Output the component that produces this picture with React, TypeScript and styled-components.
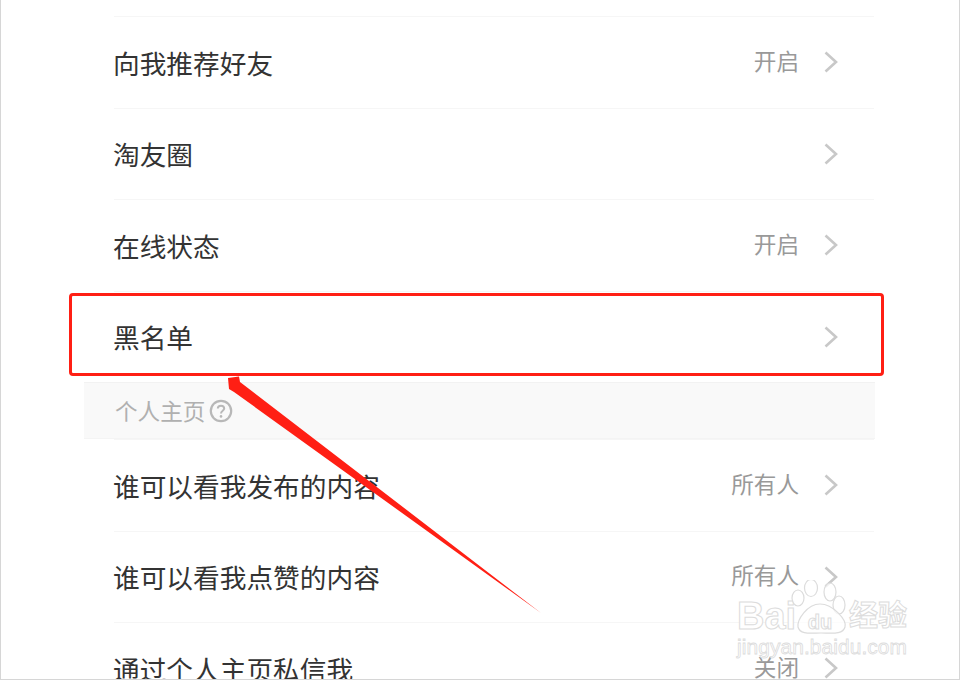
import React from 'react'
import styled, { createGlobalStyle } from 'styled-components'

const GlobalStyle = createGlobalStyle`
    html, body {
        margin: 0;
        padding: 0;
        background: #fff;
    }
    * {
        box-sizing: border-box;
    }
`

const Page = styled.div`
    position: relative;
    width: 960px;
    height: 680px;
    overflow: hidden;
    background: #fff;
    border-left: 1px solid #d6d6d6;
    border-right: 1px solid #d6d6d6;
    border-bottom: 1px solid #d6d6d6;
    padding: 16px 84px 0 83px;
    font-family: "Liberation Sans", "Noto Sans CJK SC", sans-serif;
`
const Row = styled.div`
    display: flex;
    align-items: center;
    height: 91.5px;
    margin: 0 1px 0 30px;
    border-top: 1px solid #f6f6f6;
`
const Label = styled.span`
    flex: 1;
    margin-left: -1px;
    font-size: 26.7px;
    color: #333;
`
const Value = styled.span`
    padding-bottom: 4px;
    font-size: 22.6px;
    color: #999;
`
const Chevron = styled.svg`
    width: 14px;
    height: 22px;
    margin: 0 36px 0 25px;
    fill: none;
    stroke: #c8c8c8;
    stroke-width: 2.6;
`
const SectionHead = styled.div`
    display: flex;
    align-items: center;
    gap: 4px;
    height: 57px;
    padding-left: 31px;
    background: #f9f9f9;
    border-top: 1px solid #f2f2f2;
    border-bottom: 1px solid #f4f4f4;
    font-size: 22.6px;
    color: #b0b0b0;
`
const Help = styled.svg`
    width: 24px;
    height: 24px;
`
const Highlight = styled.div`
    position: absolute;
    left: 68px;
    top: 293px;
    width: 815px;
    height: 83px;
    border: 3px solid #ff1f14;
    border-radius: 4px;
`
const Arrow = styled.svg`
    position: absolute;
    left: -1px;
    top: 0;
    width: 960px;
    height: 680px;
`
const Mark = styled.div`
    position: absolute;
    left: 736px;
    top: 580px;
    display: flex;
    flex-direction: column;
    width: 176px;
    color: #fff;
    font-weight: 700;
    -webkit-text-stroke: 1px #dcdcdc;
`
const MarkLine = styled.div`
    display: flex;
    align-items: flex-end;
    height: 55px;
`
const MarkBai = styled.span`
    width: 54px;
    font-size: 38px;
    line-height: 1;
`
const MarkPaw = styled.div`
    position: relative;
    display: flex;
    justify-content: center;
    align-items: flex-end;
    width: 58px;
    height: 55px;
    padding-bottom: 3px;
    font-size: 20px;
    line-height: 1;
`
const PawShape = styled.svg`
    position: absolute;
    left: 0;
    top: 0;
    width: 58px;
    height: 55px;
    fill: rgba(255, 255, 255, 0.7);
    stroke: #dcdcdc;
    stroke-width: 1.2;
`
const MarkDu = styled.span`
    position: relative;
`
const MarkCn = styled.span`
    margin-bottom: 4px;
    font-size: 29px;
    line-height: 1;
`
const MarkUrl = styled.span`
    font-size: 20.9px;
    font-weight: 400;
    letter-spacing: 0.1px;
    -webkit-text-stroke: 0.8px #dcdcdc;
`

type Item = { label: string; value?: string }

const topItems: Item[] = [
    { label: '向我推荐好友', value: '开启' },
    { label: '淘友圈' },
    { label: '在线状态', value: '开启' },
    { label: '黑名单' },
]

const profileItems: Item[] = [
    { label: '谁可以看我发布的内容', value: '所有人' },
    { label: '谁可以看我点赞的内容', value: '所有人' },
    { label: '通过个人主页私信我', value: '关闭' },
]

function SettingRow({ label, value }: Item) {
    return (
        <Row>
            <Label>{label}</Label>
            {value && <Value>{value}</Value>}
            <Chevron viewBox="0 0 14 22">
                <path d="M1.5 1.5 L12 11 L1.5 20.5" />
            </Chevron>
        </Row>
    )
}

function App() {
    return (
        <Page>
            <GlobalStyle />
            {topItems.map((item) => (
                <SettingRow key={item.label} {...item} />
            ))}
            <SectionHead>
                个人主页
                <Help viewBox="0 0 24 24">
                    <circle cx="12" cy="12" r="10.2" fill="none" stroke="#b8b8b8" strokeWidth="2.2" />
                    <path d="M8.8 9.6 C8.8 5.8 15.2 5.8 15.2 9.6 C15.2 11.8 12 11.8 12 14.4" fill="none" stroke="#b8b8b8" strokeWidth="2" />
                    <circle cx="12" cy="17.4" r="1.3" fill="#b8b8b8" />
                </Help>
            </SectionHead>
            {profileItems.map((item) => (
                <SettingRow key={item.label} {...item} />
            ))}
            <Highlight />
            <Arrow viewBox="0 0 960 680">
                <polygon points="228,378 239,376.5 240,382 541,613 234,392 229,389" fill="#ff1f14" />
            </Arrow>
            <Mark>
                <MarkLine>
                    <MarkBai>Bai</MarkBai>
                    <MarkPaw>
                        <PawShape viewBox="0 0 58 55">
                            <ellipse cx="7" cy="18" rx="6" ry="8" />
                            <ellipse cx="20" cy="8" rx="6.5" ry="8.5" />
                            <ellipse cx="39" cy="12" rx="6" ry="9" />
                            <ellipse cx="48" cy="25" rx="6" ry="9" />
                            <path d="M29 24 C42 24 56 40 54 47 C52 55 40 53 30 53 C20 53 9 55 7 47 C6 40 16 24 29 24 Z" />
                        </PawShape>
                        <MarkDu>du</MarkDu>
                    </MarkPaw>
                    <MarkCn>经验</MarkCn>
                </MarkLine>
                <MarkUrl>jingyan.baidu.com</MarkUrl>
            </Mark>
        </Page>
    )
}

export default App
